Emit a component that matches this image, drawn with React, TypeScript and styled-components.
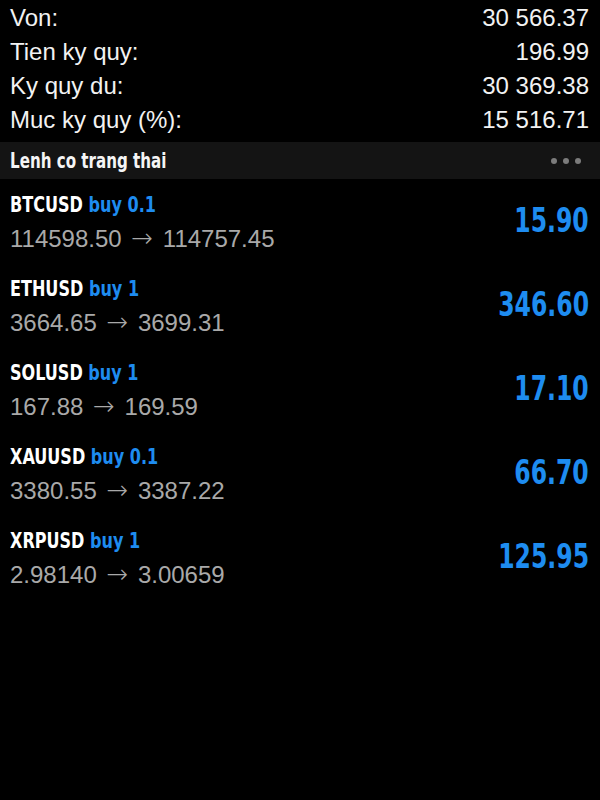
import styled, { createGlobalStyle } from 'styled-components';

const GlobalStyle = createGlobalStyle`
    html, body {
        margin: 0;
        padding: 0;
        background: #000;
    }
    body {
        font-family: 'Liberation Sans', Arial, sans-serif;
    }
`;

const narrow = `'Liberation Sans Narrow', 'DejaVu Sans Condensed', sans-serif`;

const Screen = styled.main`
    width: 600px;
    min-height: 800px;
    background: #000;
    color: #f2f2f2;
`;

const Summary = styled.section`
    padding: 1px 11px 0 10px;
    margin-bottom: 5px;
`;

const SummaryRow = styled.div`
    display: flex;
    justify-content: space-between;
    align-items: center;
    height: 34px;
    font-size: 24px;
    color: #f2f2f2;
`;

const SectionBar = styled.div`
    display: flex;
    align-items: center;
    justify-content: space-between;
    height: 37px;
    padding: 0 19px 0 10px;
    background: #141414;
`;

// the app uses a condensed bold face; squeeze DejaVu Condensed to match it
const Squeezed = styled.span<{ $scale: number; $origin?: string }>`
    display: inline-block;
    white-space: nowrap;
    transform: scaleX(${(p) => p.$scale});
    transform-origin: ${(p) => p.$origin ?? 'left'} center;
`;

const SectionTitle = styled.h2`
    margin: 0;
    font-family: ${narrow};
    font-weight: bold;
    font-size: 21px;
    color: #f5f5f5;
`;

const Dots = styled.div`
    display: flex;
    gap: 6px;
`;

const Dot = styled.span`
    width: 6px;
    height: 6px;
    border-radius: 50%;
    background: #7c7c7c;
`;

const PositionRow = styled.div`
    display: flex;
    align-items: center;
    justify-content: space-between;
    height: 84px;
    padding: 0 11px 0 10px;
    box-sizing: border-box;
`;

const PositionInfo = styled.div`
    display: flex;
    flex-direction: column;
    padding-top: 4px;
`;

const SymbolLine = styled.div`
    height: 30px;
    line-height: 30px;
    font-family: ${narrow};
    font-weight: bold;
    font-size: 21px;
    color: #fff;
`;

const Side = styled.span`
    color: #1e8cf0;
`;

const PriceLine = styled.div`
    height: 36px;
    line-height: 36px;
    font-size: 24px;
    color: #a9a9a9;
`;

const Arrow = styled.span`
    font-family: 'DejaVu Sans', sans-serif;
    font-weight: 300;
    font-size: 26px;
    margin: 0 3px;
`;

const Profit = styled.div`
    font-family: ${narrow};
    font-weight: bold;
    font-size: 34px;
    color: #1e8cf0;
    margin-top: -2px;
`;

const summary = [
    { label: 'Von:', value: '30 566.37' },
    { label: 'Tien ky quy:', value: '196.99' },
    { label: 'Ky quy du:', value: '30 369.38' },
    { label: 'Muc ky quy (%):', value: '15 516.71' },
];

const positions = [
    { symbol: 'BTCUSD', volume: '0.1', open: '114598.50', current: '114757.45', profit: '15.90' },
    { symbol: 'ETHUSD', volume: '1', open: '3664.65', current: '3699.31', profit: '346.60' },
    { symbol: 'SOLUSD', volume: '1', open: '167.88', current: '169.59', profit: '17.10' },
    { symbol: 'XAUUSD', volume: '0.1', open: '3380.55', current: '3387.22', profit: '66.70' },
    { symbol: 'XRPUSD', volume: '1', open: '2.98140', current: '3.00659', profit: '125.95' },
];

const App = () => {
    return (
        <>
            <GlobalStyle />
            <Screen>
                <Summary>
                    {summary.map((row) => (
                        <SummaryRow key={row.label}>
                            <span>{row.label}</span>
                            <span>{row.value}</span>
                        </SummaryRow>
                    ))}
                </Summary>
                <SectionBar>
                    <SectionTitle>
                        <Squeezed $scale={0.8}>Lenh co trang thai</Squeezed>
                    </SectionTitle>
                    <Dots>
                        <Dot />
                        <Dot />
                        <Dot />
                    </Dots>
                </SectionBar>
                {positions.map((p) => (
                    <PositionRow key={p.symbol}>
                        <PositionInfo>
                            <SymbolLine>
                                <Squeezed $scale={0.85}>
                                    {p.symbol} <Side>buy {p.volume}</Side>
                                </Squeezed>
                            </SymbolLine>
                            <PriceLine>
                                {p.open} <Arrow>→</Arrow> {p.current}
                            </PriceLine>
                        </PositionInfo>
                        <Profit>
                            <Squeezed $scale={0.77} $origin="right">
                                {p.profit}
                            </Squeezed>
                        </Profit>
                    </PositionRow>
                ))}
            </Screen>
        </>
    );
};

export default App;
